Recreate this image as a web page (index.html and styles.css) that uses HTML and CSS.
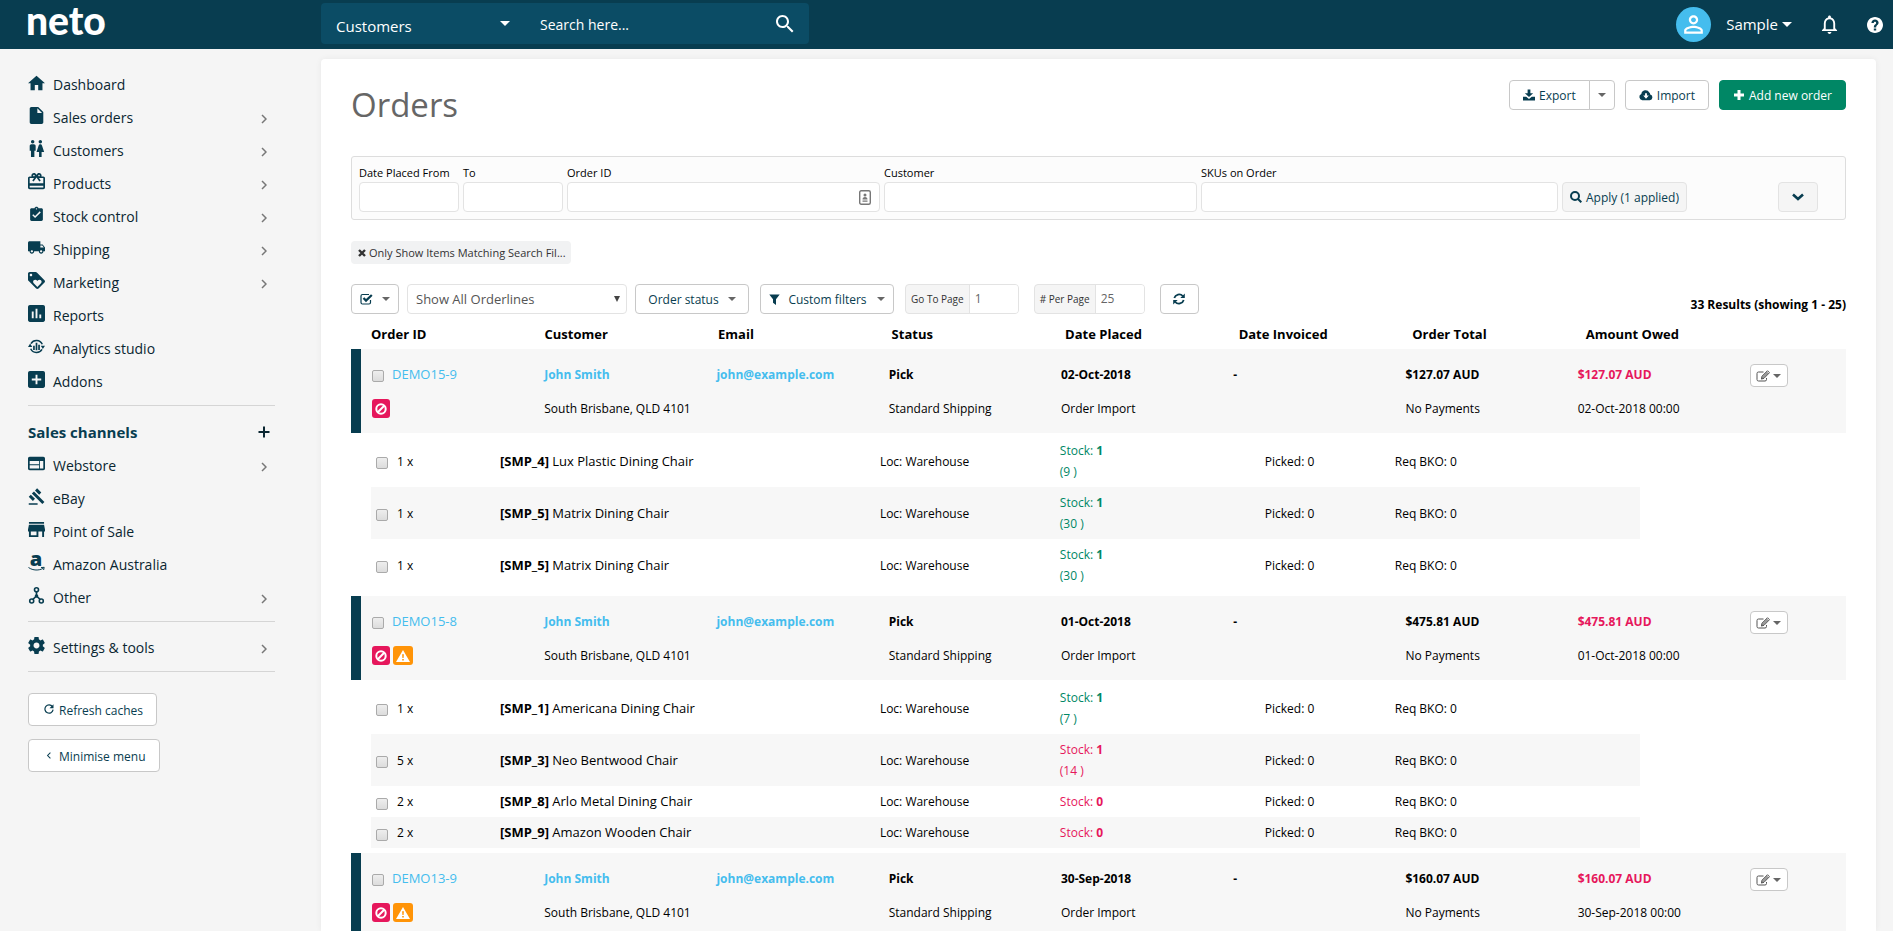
FILE: index.html
```html
<!DOCTYPE html>
<html lang="en">
<head>
<meta charset="utf-8">
<meta name="viewport" content="width=device-width, initial-scale=1">
<title>Orders</title>
<link rel="stylesheet" href="styles.css">
</head>
<body>
<svg class="sprite" aria-hidden="true">
  <symbol id="home" viewBox="2 1 20 20"><path d="M10 20v-6h4v6h5v-8h3L12 3 2 12h3v8z"/></symbol>
  <symbol id="file" viewBox="2 2 20 20"><path d="M6 2c-1.1 0-1.99.9-1.99 2L4 20c0 1.1.89 2 1.99 2H18c1.1 0 2-.9 2-2V8l-6-6H6zm7 7V3.5L18.500 9H13z"/></symbol>
  <symbol id="people" viewBox="2 2 20 20"><path d="M5.500 22v-7.500H4V9c0-1.100.9-2 2-2h3c1.100 0 2 .9 2 2v5.500H9.500V22h-4zM18 22v-6h3l-2.540-7.630C18.180 7.550 17.420 7 16.560 7h-.12c-.86 0-1.630.55-1.900 1.370L12 16h3v6h3zM7.500 6c1.110 0 2-.89 2-2s-.89-2-2-2-2 .89-2 2 .89 2 2 2zm9 0c1.110 0 2-.89 2-2s-.89-2-2-2-2 .89-2 2 .89 2 2 2z"/></symbol>
  <symbol id="gift" viewBox="2 2 20 20"><path d="M20 6h-2.180c.11-.31.18-.65.18-1 0-1.660-1.340-3-3-3-1.050 0-1.960.54-2.500 1.350l-.5.67-.5-.68C10.960 2.540 10.050 2 9 2 7.340 2 6 3.340 6 5c0 .35.07.69.18 1H4c-1.110 0-1.990.89-1.990 2L2 19c0 1.110.89 2 2 2h16c1.110 0 2-.89 2-2V8c0-1.110-.89-2-2-2zm-5-2c.55 0 1 .45 1 1s-.45 1-1 1-1-.45-1-1 .45-1 1-1zM9 4c.55 0 1 .45 1 1s-.45 1-1 1-1-.45-1-1 .45-1 1-1zm11 15H4v-2h16v2zm0-5H4V8h5.080L7 10.830 8.620 12 11 8.760l1-1.360 1 1.360L15.380 12 17 10.830 14.920 8H20v6z"/></symbol>
  <symbol id="clipboard" viewBox="0 0 24 24"><path d="M19 3h-4.180C14.400 1.840 13.300 1 12 1c-1.300 0-2.400.84-2.820 2H5c-1.100 0-2 .9-2 2v14c0 1.100.9 2 2 2h14c1.100 0 2-.9 2-2V5c0-1.100-.9-2-2-2zm-7 0c.55 0 1 .45 1 1s-.45 1-1 1-1-.45-1-1 .45-1 1-1zm-2 14l-4-4 1.410-1.410L10 14.170l6.590-6.590L18 9l-8 8z"/></symbol>
  <symbol id="truck" viewBox="1 1 22 22"><path d="M20 8h-3V4H3c-1.100 0-2 .9-2 2v11h2c0 1.660 1.340 3 3 3s3-1.340 3-3h6c0 1.660 1.340 3 3 3s3-1.340 3-3h2v-5l-3-4zM6 18.500c-.83 0-1.500-.67-1.500-1.500s.67-1.500 1.500-1.500 1.500.67 1.500 1.500-.67 1.500-1.500 1.500zm13.500-9l1.960 2.500H17V9.500h2.500zm-1.500 9c-.83 0-1.500-.67-1.500-1.500s.67-1.500 1.500-1.500 1.500.67 1.500 1.500-.67 1.500-1.500 1.500z"/></symbol>
  <symbol id="tag" viewBox="2 2 20 20"><path d="M21.410 11.580l-9-9C12.050 2.220 11.550 2 11 2H4c-1.100 0-2 .9-2 2v7c0 .55.22 1.050.59 1.420l9 9c.36.36.86.58 1.410.58.55 0 1.050-.22 1.410-.59l7-7c.37-.36.59-.86.59-1.410 0-.55-.23-1.060-.59-1.420zM5.500 7C4.670 7 4 6.330 4 5.500S4.670 4 5.500 4 7 4.670 7 5.500 6.330 7 5.500 7zm11.770 8.270L13 19.540l-4.270-4.270C8.280 14.810 8 14.190 8 13.500c0-1.380 1.120-2.500 2.500-2.500.69 0 1.320.28 1.770.74l.73.72.73-.73c.45-.45 1.080-.73 1.770-.73 1.380 0 2.500 1.120 2.500 2.500 0 .69-.28 1.320-.73 1.770z"/></symbol>
  <symbol id="chart" viewBox="3 3 18 18"><path d="M19 3H5c-1.100 0-2 .9-2 2v14c0 1.100.9 2 2 2h14c1.100 0 2-.9 2-2V5c0-1.100-.9-2-2-2zM9 17H7v-7h2v7zm4 0h-2V7h2v10zm4 0h-2v-4h2v4z"/></symbol>
  <symbol id="addbox" viewBox="3 3 18 18"><path d="M19 3H5c-1.100 0-2 .9-2 2v14c0 1.100.9 2 2 2h14c1.100 0 2-.9 2-2V5c0-1.100-.9-2-2-2zm-2 10h-4v4h-2v-4H7v-2h4V7h2v4h4v2z"/></symbol>
  <symbol id="analytics" viewBox="0 0 20 20"><path d="M3.500 6.500a7.500 7.500 0 0 1 13.300.8M16.500 13.500a7.500 7.500 0 0 1-13.300-.8" fill="none" stroke="currentColor" stroke-width="1.800"/><path d="M0 10.500h5l-2.500-4zM15 9h5l-2.500 4zM6 9h2v5H6zM9 5.500h2v9H9zM12 8h2v6h-2z"/></symbol>
  <symbol id="web" viewBox="2 2 20 20"><path d="M20 4H4c-1.100 0-1.990.9-1.990 2L2 18c0 1.100.9 2 2 2h16c1.100 0 2-.9 2-2V6c0-1.100-.9-2-2-2zm-5 14H4v-4h11v4zm0-5H4V9h11v4zm5 5h-4V9h4v9z"/></symbol>
  <symbol id="gavel" viewBox="0 1 23 22"><path d="M1 21h12v2H1zM5.245 8.070l2.830-2.827 14.140 14.142-2.828 2.828zM12.317 1l5.657 5.656-2.830 2.830-5.654-5.660zM3.825 9.485l5.657 5.657-2.828 2.828-5.657-5.657z"/></symbol>
  <symbol id="store" viewBox="3 3 18 18"><path d="M20 4H4v2h16V4zm1 10v-2l-1-5H4l-1 5v2h1v6h10v-6h4v6h2v-6h1zm-9 4H6v-4h6v4z"/></symbol>
  <symbol id="nodes" viewBox="0 0 17 17"><g fill="none" stroke="currentColor" stroke-width="1.600"><circle cx="8.500" cy="2.800" r="2"/><circle cx="3.700" cy="14" r="2"/><circle cx="13.300" cy="14" r="2"/><path d="M8.500 5v4M4.900 12.300L8.500 9l3.600 3.300"/></g><circle cx="8.500" cy="9" r="1.800"/></symbol>
  <symbol id="gear" viewBox="2 2 20 20"><path d="M19.430 12.980c.04-.32.07-.64.07-.98s-.03-.66-.07-.98l2.110-1.650c.19-.15.24-.42.12-.64l-2-3.460c-.12-.22-.39-.3-.61-.22l-2.490 1c-.52-.4-1.080-.73-1.690-.98l-.38-2.650C14.460 2.180 14.250 2 14 2h-4c-.25 0-.46.18-.49.42l-.38 2.650c-.61.25-1.170.59-1.690.98l-2.490-1c-.23-.09-.49 0-.61.22l-2 3.460c-.13.22-.07.49.12.64l2.110 1.650c-.04.32-.07.65-.07.98s.03.66.07.98l-2.110 1.650c-.19.15-.24.42-.12.64l2 3.460c.12.22.39.3.61.22l2.490-1c.52.4 1.080.73 1.690.98l.38 2.650c.03.24.24.42.49.42h4c.25 0 .46-.18.49-.42l.38-2.650c.61-.25 1.170-.59 1.690-.98l2.490 1c.23.09.49 0 .61-.22l2-3.460c.12-.22.07-.49-.12-.64l-2.110-1.650zM12 15.500c-1.930 0-3.500-1.570-3.500-3.500s1.570-3.500 3.500-3.500 3.500 1.570 3.500 3.500-1.570 3.500-3.500 3.500z"/></symbol>
  <symbol id="chevron" viewBox="0 0 6 10"><path d="M1 1l4 4-4 4" fill="none" stroke="currentColor" stroke-width="1.500"/></symbol>
  <symbol id="caret" viewBox="0 0 8 4"><path d="M0 0h8L4 4z"/></symbol>
  <symbol id="search" viewBox="3 3 18 18"><path d="M15.500 14h-.79l-.28-.27C15.410 12.590 16 11.110 16 9.500 16 5.910 13.090 3 9.500 3S3 5.910 3 9.500 5.910 16 9.500 16c1.610 0 3.090-.59 4.230-1.570l.27.28v.79l5 4.990L20.490 19l-4.990-5zm-6 0C7.010 14 5 11.990 5 9.500S7.010 5 9.500 5 14 7.010 14 9.500 11.990 14 9.500 14z"/></symbol>
  <symbol id="user" viewBox="3 3 18 18"><path d="M12 5.900c1.160 0 2.100.94 2.100 2.100s-.94 2.100-2.100 2.100S9.900 9.160 9.900 8s.94-2.100 2.100-2.100m0 9c2.970 0 6.100 1.460 6.100 2.100v1.100H5.900V17c0-.64 3.130-2.100 6.100-2.100M12 4C9.790 4 8 5.790 8 8s1.790 4 4 4 4-1.790 4-4-1.790-4-4-4zm0 9c-2.670 0-8 1.340-8 4v3h16v-3c0-2.660-5.330-4-8-4z"/></symbol>
  <symbol id="bell" viewBox="3 2 18 20"><path d="M12 22c1.100 0 2-.9 2-2h-4c0 1.100.9 2 2 2zm6-6v-5c0-3.070-1.630-5.640-4.500-6.320V4c0-.83-.67-1.500-1.500-1.500s-1.500.67-1.500 1.500v.68C7.640 5.360 6 7.920 6 11v5l-2 2v1h16v-1l-2-2zm-2 1H8v-6c0-2.480 1.510-4.500 4-4.500s4 2.020 4 4.500v6z"/></symbol>
  <symbol id="help" viewBox="2 2 20 20"><path d="M12 2C6.480 2 2 6.480 2 12s4.480 10 10 10 10-4.480 10-10S17.520 2 12 2zm1.500 17h-3v-2.700h3V19zm1.900-7.400c-1.300 1.200-1.900 1.500-1.900 3.400h-3v-.5c0-1.300.6-2.300 1.500-3.100 1-.9 1.400-1.200 1.400-2 0-.9-.6-1.400-1.400-1.400s-1.500.6-1.500 1.500h-3C7.500 7 9.500 5 12 5s4.500 1.700 4.500 4.100c0 1-.4 1.800-1.100 2.500z"/></symbol>
  <symbol id="download" viewBox="0 0 13 12"><path d="M5 0h3v4h3L6.500 8.300 2 4h3zM0 8h3.500l3 2.300 3-2.300H13v4H0z"/></symbol>
  <symbol id="cloud" viewBox="0 0 15 12"><path d="M3.500 11.500a3.500 3.500 0 0 1-1-6.700A4.500 4.500 0 0 1 11 3.400a2.400 2.400 0 0 1 1 2 3.100 3.100 0 0 1-.5 6.100zM6.500 4v2.500h-2L7.500 10l3-3.500h-2V4z" fill-rule="evenodd"/></symbol>
  <symbol id="plus" viewBox="0 0 12 12"><path d="M4.500 1h3v3.500H11v3H7.500V11h-3V7.500H1v-3h3.500z"/></symbol>
  <symbol id="thinplus" viewBox="0 0 12 12"><path d="M6 .5v11M.5 6h11" stroke="currentColor" stroke-width="2"/></symbol>
  <symbol id="glass" viewBox="0 0 12 12"><g fill="none" stroke="currentColor" stroke-width="2"><circle cx="5" cy="5" r="4"/><path d="M8 8l3.300 3.300"/></g></symbol>
  <symbol id="down" viewBox="0 0 12 8"><path d="M1 1.500l5 4.500 5-4.500" fill="none" stroke="currentColor" stroke-width="2.600"/></symbol>
  <symbol id="cross" viewBox="0 0 8 8"><path d="M1 1l6 6M7 1L1 7" stroke="currentColor" stroke-width="2.400"/></symbol>
  <symbol id="tick" viewBox="0 0 13 12"><path d="M10.500 7v2.500a1.500 1.500 0 0 1-1.500 1.500H2.500A1.500 1.500 0 0 1 1 9.500V3a1.500 1.500 0 0 1 1.500-1.500H9" fill="none" stroke="currentColor" stroke-width="1.200"/><path d="M3.500 5l2.500 2.600L11.800 2" fill="none" stroke="currentColor" stroke-width="2.200"/></symbol>
  <symbol id="funnel" viewBox="0 0 11 11"><path d="M.3.500h10.400L7 5.200V11L4 8.800V5.200z"/></symbol>
  <symbol id="sync" viewBox="0 0 12 12"><path d="M1.300 5a5 5 0 0 1 8.500-2M10.700 7a5 5 0 0 1-8.500 2" fill="none" stroke="currentColor" stroke-width="1.800"/><path d="M11.800.5V5H7.300zM.2 11.500V7h4.500z"/></symbol>
  <symbol id="reload" viewBox="0 0 10 10"><path d="M8.400 2.700a4.100 4.100 0 1 0 .7 3" fill="none" stroke="currentColor" stroke-width="1.200"/><path d="M9.500.3v4H5.500z"/></symbol>
  <symbol id="ban" viewBox="0 0 12 12"><g fill="none" stroke="currentColor" stroke-width="2"><circle cx="6" cy="6" r="4.700"/><path d="M2.800 9.200l6.400-6.400"/></g></symbol>
  <symbol id="warn" viewBox="0 0 14 12"><path d="M7 0l7 12H0zM6.100 4.200l.3 3.800h1.200l.3-3.800zM6.200 9v1.500h1.600V9z" fill-rule="evenodd"/></symbol>
  <symbol id="edit" viewBox="0 0 14 12"><path d="M10.500 8v1.500A1.500 1.500 0 0 1 9 11H2.500A1.500 1.500 0 0 1 1 9.500v-6A1.500 1.500 0 0 1 2.500 2h5" fill="none" stroke="currentColor"/><path d="M5.500 9l.5-2.800L11.500.7l2 2L8 8.300z" fill="none" stroke="currentColor"/><path d="M5 9.500l.7-2.600L11 1.600l1.600 1.600-5.200 5.400z" fill-opacity=".6"/></symbol>
  <symbol id="contact" viewBox="0 0 12 15"><rect x=".7" y=".7" width="10.600" height="13.600" rx="1.500" fill="none" stroke="currentColor" stroke-width="1.400"/><circle cx="6" cy="5" r="1.500"/><path d="M3.500 9.500a2.500 2.500 0 0 1 5 0zM3.500 10.500h5v1.200h-5z"/></symbol>
</svg>

<header class="topbar">
  <a class="logo" href="#" aria-label="neto">neto</a>
  <form class="finder">
    <label class="picker finder-type">
      <select aria-label="Search in"><option>Customers</option></select>
      <svg class="caret"><use href="#caret"/></svg>
    </label>
    <input class="finder-text" type="text" placeholder="Search here..." aria-label="Search">
    <button class="finder-go" type="button" aria-label="Search"><svg><use href="#search"/></svg></button>
  </form>
  <div class="account">
    <span class="avatar"><svg><use href="#user"/></svg></span>
    <button class="account-name" type="button">Sample <svg class="caret"><use href="#caret"/></svg></button>
    <button class="bell" type="button" aria-label="Notifications"><svg><use href="#bell"/></svg></button>
    <a class="help" href="#" aria-label="Help"><svg><use href="#help"/></svg></a>
  </div>
</header>

<div class="layout">
  <nav class="sidebar">
    <a class="nav-item" href="#"><svg class="nav-icon"><use href="#home"/></svg>Dashboard</a>
    <a class="nav-item" href="#"><svg class="nav-icon"><use href="#file"/></svg>Sales orders<svg class="nav-more"><use href="#chevron"/></svg></a>
    <a class="nav-item" href="#"><svg class="nav-icon"><use href="#people"/></svg>Customers<svg class="nav-more"><use href="#chevron"/></svg></a>
    <a class="nav-item" href="#"><svg class="nav-icon"><use href="#gift"/></svg>Products<svg class="nav-more"><use href="#chevron"/></svg></a>
    <a class="nav-item" href="#"><svg class="nav-icon"><use href="#clipboard"/></svg>Stock control<svg class="nav-more"><use href="#chevron"/></svg></a>
    <a class="nav-item" href="#"><svg class="nav-icon"><use href="#truck"/></svg>Shipping<svg class="nav-more"><use href="#chevron"/></svg></a>
    <a class="nav-item" href="#"><svg class="nav-icon"><use href="#tag"/></svg>Marketing<svg class="nav-more"><use href="#chevron"/></svg></a>
    <a class="nav-item" href="#"><svg class="nav-icon"><use href="#chart"/></svg>Reports</a>
    <a class="nav-item" href="#"><svg class="nav-icon"><use href="#analytics"/></svg>Analytics studio</a>
    <a class="nav-item" href="#"><svg class="nav-icon"><use href="#addbox"/></svg>Addons</a>
    <hr class="divider">
    <div class="nav-heading"><h2>Sales channels</h2><button type="button" aria-label="Add sales channel"><svg><use href="#thinplus"/></svg></button></div>
    <a class="nav-item" href="#"><svg class="nav-icon"><use href="#web"/></svg>Webstore<svg class="nav-more"><use href="#chevron"/></svg></a>
    <a class="nav-item" href="#"><svg class="nav-icon"><use href="#gavel"/></svg>eBay</a>
    <a class="nav-item" href="#"><svg class="nav-icon"><use href="#store"/></svg>Point of Sale</a>
    <a class="nav-item" href="#"><svg class="nav-icon amazon" viewBox="0 0 17 17" aria-hidden="true"><text x="8" y="12" text-anchor="middle">a</text><path d="M.5 13.500c4.500 3.200 10.500 3.200 14.800.8M13 13.600l3.200-.3-.6 2.700" fill="none" stroke="currentColor"/></svg>Amazon Australia</a>
    <a class="nav-item" href="#"><svg class="nav-icon"><use href="#nodes"/></svg>Other<svg class="nav-more"><use href="#chevron"/></svg></a>
    <hr class="divider">
    <a class="nav-item" href="#"><svg class="nav-icon"><use href="#gear"/></svg>Settings &amp; tools<svg class="nav-more"><use href="#chevron"/></svg></a>
    <hr class="divider">
    <div class="nav-actions">
      <button class="btn" type="button"><svg class="i10"><use href="#reload"/></svg>Refresh caches</button>
      <button class="btn" type="button"><svg class="back"><use href="#chevron"/></svg>Minimise menu</button>
    </div>
  </nav>

  <main class="card">
    <div class="title-row">
      <h1>Orders</h1>
      <div class="title-actions">
        <div class="split">
          <button class="btn" type="button"><svg class="i12"><use href="#download"/></svg>Export</button>
          <button class="btn" type="button" aria-label="Export options"><svg class="caret"><use href="#caret"/></svg></button>
        </div>
        <button class="btn" type="button"><svg class="i14"><use href="#cloud"/></svg>Import</button>
        <button class="btn primary" type="button"><svg class="i12"><use href="#plus"/></svg>Add new order</button>
      </div>
    </div>

    <form class="filters">
      <label class="field">Date Placed From<input type="text"></label>
      <label class="field">To<input type="text"></label>
      <label class="field with-icon">Order ID<input type="text"><svg><use href="#contact"/></svg></label>
      <label class="field">Customer<input type="text"></label>
      <label class="field">SKUs on Order<input type="text"></label>
      <button class="btn soft" type="button"><svg class="i12"><use href="#glass"/></svg>Apply (1 applied)</button>
      <button class="btn soft expand" type="button" aria-label="More filters"><svg class="i12"><use href="#down"/></svg></button>
    </form>

    <button class="chip" type="button"><svg><use href="#cross"/></svg>Only Show Items Matching Search Fil...</button>

    <div class="toolbar">
      <button class="btn select-all" type="button" aria-label="Select"><svg class="i13"><use href="#tick"/></svg><svg class="caret"><use href="#caret"/></svg></button>
      <label class="picker lines-picker">
        <select aria-label="Order lines"><option>Show All Orderlines</option></select>
        <svg class="arrow" viewBox="0 0 6 6"><path d="M0 0h6L3 6z"/></svg>
      </label>
      <button class="btn status" type="button">Order status<svg class="caret"><use href="#caret"/></svg></button>
      <button class="btn custom" type="button"><svg class="i11"><use href="#funnel"/></svg>Custom filters<svg class="caret"><use href="#caret"/></svg></button>
      <label class="group">Go To Page<input type="text" value="1"></label>
      <label class="group">&#35; Per Page<input type="text" value="25"></label>
      <button class="btn refresh" type="button" aria-label="Refresh"><svg class="i12"><use href="#sync"/></svg></button>
      <p class="results">33 Results (showing 1 - 25)</p>
    </div>

    <table class="orders">
      <thead>
        <tr><th>Order ID</th><th>Customer</th><th>Email</th><th>Status</th><th>Date Placed</th><th>Date Invoiced</th><th>Order Total</th><th>Amount Owed</th></tr>
      </thead>
      <tbody>
        <tr class="order">
          <td><div class="pick"><input type="checkbox" aria-label="Select DEMO15-9"><a href="#">DEMO15-9</a></div><div class="flags"><span class="flag stop"><svg class="i12"><use href="#ban"/></svg></span></div></td>
          <td><a href="#"><b>John Smith</b></a><span>South Brisbane, QLD 4101</span></td>
          <td><a href="#"><b>john@example.com</b></a></td>
          <td><b>Pick</b><span>Standard Shipping</span></td>
          <td><b>02-Oct-2018</b><span>Order Import</span></td>
          <td><b>-</b></td>
          <td><b>$127.07 AUD</b><span>No Payments</span></td>
          <td><b class="low">$127.07 AUD</b><span>02-Oct-2018 00:00</span></td>
          <td><button class="btn edit" type="button" aria-label="Edit order"><svg class="i14"><use href="#edit"/></svg><svg class="caret"><use href="#caret"/></svg></button></td>
        </tr>
      </tbody>
      <tbody class="lines">
        <tr><td><input type="checkbox" aria-label="Select line">1 x</td><td class="item"><b>[SMP_4]</b> Lux Plastic Dining Chair</td><td>Loc: Warehouse</td><td class="ok">Stock: <b>1</b><br>(9 )</td><td>Picked: 0</td><td>Req BKO: 0</td></tr>
        <tr><td><input type="checkbox" aria-label="Select line">1 x</td><td class="item"><b>[SMP_5]</b> Matrix Dining Chair</td><td>Loc: Warehouse</td><td class="ok">Stock: <b>1</b><br>(30 )</td><td>Picked: 0</td><td>Req BKO: 0</td></tr>
        <tr><td><input type="checkbox" aria-label="Select line">1 x</td><td class="item"><b>[SMP_5]</b> Matrix Dining Chair</td><td>Loc: Warehouse</td><td class="ok">Stock: <b>1</b><br>(30 )</td><td>Picked: 0</td><td>Req BKO: 0</td></tr>
      </tbody>
      <tbody>
        <tr class="order">
          <td><div class="pick"><input type="checkbox" aria-label="Select DEMO15-8"><a href="#">DEMO15-8</a></div><div class="flags"><span class="flag stop"><svg class="i12"><use href="#ban"/></svg></span><span class="flag caution"><svg class="i14"><use href="#warn"/></svg></span></div></td>
          <td><a href="#"><b>John Smith</b></a><span>South Brisbane, QLD 4101</span></td>
          <td><a href="#"><b>john@example.com</b></a></td>
          <td><b>Pick</b><span>Standard Shipping</span></td>
          <td><b>01-Oct-2018</b><span>Order Import</span></td>
          <td><b>-</b></td>
          <td><b>$475.81 AUD</b><span>No Payments</span></td>
          <td><b class="low">$475.81 AUD</b><span>01-Oct-2018 00:00</span></td>
          <td><button class="btn edit" type="button" aria-label="Edit order"><svg class="i14"><use href="#edit"/></svg><svg class="caret"><use href="#caret"/></svg></button></td>
        </tr>
      </tbody>
      <tbody class="lines">
        <tr><td><input type="checkbox" aria-label="Select line">1 x</td><td class="item"><b>[SMP_1]</b> Americana Dining Chair</td><td>Loc: Warehouse</td><td class="ok">Stock: <b>1</b><br>(7 )</td><td>Picked: 0</td><td>Req BKO: 0</td></tr>
        <tr><td><input type="checkbox" aria-label="Select line">5 x</td><td class="item"><b>[SMP_3]</b> Neo Bentwood Chair</td><td>Loc: Warehouse</td><td class="low">Stock: <b>1</b><br>(14 )</td><td>Picked: 0</td><td>Req BKO: 0</td></tr>
        <tr><td><input type="checkbox" aria-label="Select line">2 x</td><td class="item"><b>[SMP_8]</b> Arlo Metal Dining Chair</td><td>Loc: Warehouse</td><td class="low">Stock: <b>0</b></td><td>Picked: 0</td><td>Req BKO: 0</td></tr>
        <tr><td><input type="checkbox" aria-label="Select line">2 x</td><td class="item"><b>[SMP_9]</b> Amazon Wooden Chair</td><td>Loc: Warehouse</td><td class="low">Stock: <b>0</b></td><td>Picked: 0</td><td>Req BKO: 0</td></tr>
      </tbody>
      <tbody>
        <tr class="order">
          <td><div class="pick"><input type="checkbox" aria-label="Select DEMO13-9"><a href="#">DEMO13-9</a></div><div class="flags"><span class="flag stop"><svg class="i12"><use href="#ban"/></svg></span><span class="flag caution"><svg class="i14"><use href="#warn"/></svg></span></div></td>
          <td><a href="#"><b>John Smith</b></a><span>South Brisbane, QLD 4101</span></td>
          <td><a href="#"><b>john@example.com</b></a></td>
          <td><b>Pick</b><span>Standard Shipping</span></td>
          <td><b>30-Sep-2018</b><span>Order Import</span></td>
          <td><b>-</b></td>
          <td><b>$160.07 AUD</b><span>No Payments</span></td>
          <td><b class="low">$160.07 AUD</b><span>30-Sep-2018 00:00</span></td>
          <td><button class="btn edit" type="button" aria-label="Edit order"><svg class="i14"><use href="#edit"/></svg><svg class="caret"><use href="#caret"/></svg></button></td>
        </tr>
      </tbody>
    </table>
  </main>
</div>
</body>
</html>
```
FILE: styles.css
```css
:root {
  --navy: #083d50;
  --blue: #45bdee;
  --green: #008765;
  --red: #e6175c;
  --line: #e3e3e3;
}

* { box-sizing: border-box; }

html, body { height: 100%; }

body {
  margin: 0;
  display: flex;
  flex-direction: column;
  overflow: hidden;
  background: #f5f5f5;
  color: #000;
  font: 12px/21px "Open Sans", "Noto Sans", sans-serif;
}

button, input, select { font: inherit; color: inherit; margin: 0; }
button { cursor: pointer; padding: 0; border: 0; background: none; white-space: nowrap; }
a { text-decoration: none; color: inherit; }
svg { display: block; flex: none; fill: currentColor; }
.sprite { position: absolute; width: 0; height: 0; }

.i10 { width: 10px; height: 10px; }
.i11 { width: 11px; height: 11px; }
.i12 { width: 12px; height: 12px; }
.i13 { width: 13px; height: 12px; }
.i14 { width: 14px; height: 12px; }
.caret { width: 8px; height: 4px; color: #666; }

/* Top bar */
.topbar {
  flex: none;
  height: 49px;
  display: flex;
  align-items: center;
  padding: 0 10px 0 26px;
  background: var(--navy);
  color: #fff;
}
.logo {
  width: 295px;
  padding-bottom: 8px;
  font: 900 39px/39px Lato, sans-serif;
}
.finder {
  display: flex;
  width: 488px;
  height: 41px;
  margin-bottom: 2px;
  border-radius: 4px;
  background: #0b4c65;
  font-size: 15px;
}
.picker { display: grid; align-items: center; }
.picker > * { grid-area: 1 / 1; }
.picker select { appearance: none; border: 0; background: none; width: 100%; height: 100%; outline: 0; }
.picker svg { justify-self: end; pointer-events: none; }
.finder-type { width: 205px; }
.finder-type select { padding: 5px 15px 0; }
.finder .caret, .account .caret { width: 10px; height: 5px; color: #fff; }
.finder-type .caret { margin-right: 16px; }
.finder-text { flex: 1; min-width: 0; border: 0; background: none; padding: 2px 15px 0 14px; outline: 0; font-size: 14px; }
.finder-text::placeholder { color: #fff; opacity: 1; }
.finder-go { padding: 0 15px; }
.finder-go svg { width: 18px; height: 18px; }
.account { margin-left: auto; display: flex; align-items: center; font-size: 15px; }
.avatar { width: 35px; height: 35px; display: grid; place-items: center; border-radius: 50%; background: var(--blue); }
.avatar svg { width: 21px; height: 21px; }
.account-name { display: flex; align-items: center; gap: 4px; margin: 0 29px 0 15px; }
.bell svg { width: 17px; height: 19px; }
.help { margin-left: 29px; }
.help svg { width: 16px; height: 16px; }

/* Page frame */
.layout { flex: 1; min-height: 0; display: flex; }
.sidebar { flex: none; width: 321px; padding: 19px 46px 0 28px; font-size: 14px; }
.nav-item { display: flex; align-items: center; gap: 8px; height: 33px; color: #0a2631; }
.nav-icon { width: 17px; height: 17px; margin-bottom: 5px; color: var(--navy); }
.nav-more { width: 6px; height: 10px; margin: 3px 8px 0 auto; color: #777; }
.amazon { overflow: visible; font: 800 20px "Open Sans", sans-serif; }
.divider { height: 1px; margin: 7px 0 9px; border: 0; background: #d5d5d5; }
.nav-heading { display: flex; align-items: center; justify-content: space-between; height: 34px; padding-right: 5px; color: var(--navy); }
.nav-heading h2 { margin: 0; font-size: 15px; line-height: 21px; }
.nav-heading svg { width: 12px; height: 12px; color: #0a2631; }
.nav-actions { display: flex; flex-direction: column; align-items: flex-start; gap: 13px; padding-top: 12px; }
.nav-actions .btn { height: 33px; padding: 2px 13px 0 15px; gap: 5px; }
.nav-actions svg { margin-bottom: 3px; }
.back { width: 10px; height: 7px; transform: rotate(180deg); }

.card {
  flex: 1;
  min-width: 0;
  margin: 10px 17px 0 0;
  padding: 21px 30px 0;
  border-radius: 4px 4px 0 0;
  background: #fff;
  box-shadow: 0 0 6px rgba(0, 0, 0, .06);
}

.btn {
  display: inline-flex;
  align-items: center;
  justify-content: center;
  gap: 4px;
  height: 30px;
  padding: 0 13px;
  border: 1px solid #c8c8c8;
  border-radius: 4px;
  background: #fff;
  color: var(--navy);
  font-size: 12px;
}
.primary { border-color: var(--green); background: var(--green); color: #fff; }
.soft { border-color: var(--line); background: #f5f5f5; font-size: 12px; padding: 0 8px; }

.title-row { display: flex; align-items: flex-start; justify-content: space-between; height: 76px; }
h1 { margin: 0; font-size: 33px; font-weight: 400; line-height: 50px; color: #666; }
.title-actions { display: flex; gap: 10px; }
.split { display: flex; }
.split .btn:first-child { border-radius: 4px 0 0 4px; }
.split .btn:last-child { border-radius: 0 4px 4px 0; margin-left: -1px; padding: 0 8px; }

/* Filters */
.filters {
  display: grid;
  grid-template-columns: 100px 100px minmax(0, 313fr) minmax(0, 313fr) minmax(0, 357fr) 125px 127px;
  align-items: end;
  gap: 4px;
  height: 64px;
  padding: 0 27px 7px 7px;
  border: 1px solid #ddd;
  border-radius: 3px;
  background: #fcfcfc;
}
.field { display: grid; font-size: 11px; line-height: 18px; }
.field input { width: 100%; height: 30px; border: 1px solid var(--line); border-radius: 4px; background: #fff; padding: 0 8px; }
.with-icon svg { grid-area: 2 / 1; justify-self: end; align-self: center; width: 12px; height: 15px; margin-right: 9px; color: #777; }
.with-icon input { grid-area: 2 / 1; }
.expand { justify-self: end; width: 40px; }

.chip {
  display: flex;
  align-items: center;
  gap: 3px;
  height: 23px;
  margin-top: 21px;
  padding: 0 5px 0 7px;
  border-radius: 4px;
  background: #f1f2f3;
  color: #333;
  font-size: 11px;
}
.chip svg { width: 8px; height: 8px; }

/* Toolbar */
.toolbar { display: flex; margin-top: 20px; }
.select-all { width: 48px; gap: 9px; padding: 0; margin-right: 8px; }
.lines-picker { width: 220px; height: 30px; margin-right: 8px; border: 1px solid var(--line); border-radius: 4px; color: #555; font-size: 13px; }
.lines-picker select { padding: 0 8px; }
.arrow { width: 6px; height: 6px; margin-right: 6px; color: #444; }
.status { width: 114px; gap: 9px; margin-right: 11px; padding: 0; }
.custom { width: 134px; gap: 8px; margin-right: 11px; padding: 0; }
.custom .caret { margin-left: 2px; }
.group { display: flex; height: 30px; margin-right: 15px; padding-left: 5px; border: 1px solid var(--line); border-radius: 4px; background: #f5f5f5; color: #333; font-size: 10px; line-height: 28px; white-space: nowrap; }
.group input { width: 49px; margin-left: 5px; padding: 0 5px; border: 0; border-left: 1px solid var(--line); border-radius: 0 3px 3px 0; background: #fff; color: #666; font-size: 12px; }
.refresh { width: 39px; padding: 0; }
.results { margin: 10px 0 0 auto; font-weight: 700; white-space: nowrap; }

/* Orders table */
.orders, .orders thead, .orders tbody { display: block; }
.orders tr { display: grid; }
.orders th, .orders td { display: block; padding: 0; min-width: 0; text-align: left; white-space: nowrap; }
.orders thead tr { grid-template-columns: repeat(8, 2fr) 1fr; align-items: center; height: 34px; padding: 4px 0 0 20px; font-size: 13px; }
.order { grid-template-columns: repeat(8, 172fr) 96fr; height: 84px; padding: 15px 0 0 11px; border-left: 10px solid var(--navy); background: #f7f7f7; }
.order td > * { display: block; }
.order td > a, .order td > b { line-height: 22px; }
.order td > span { margin-top: 12px; }
.order a { color: var(--blue); }
.order .pick { display: flex; gap: 8px; height: 22px; }
.pick a { line-height: 20px; font-size: 13px; }
.order .flags { display: flex; gap: 3px; margin-top: 13px; }
.order input, .lines input {
  appearance: none;
  flex: none;
  width: 12px;
  height: 12px;
  border: 1px solid #aaa;
  border-radius: 2px;
  background: linear-gradient(#eee, #dcdcdc);
}
.pick input { margin-top: 6px; }
.flag { display: grid; place-items: center; height: 19px; padding: 0 3px; border-radius: 3px; color: #fff; }
.stop { background: var(--red); }
.caution { background: #ff9408; }
.order .edit { display: inline-flex; height: 23px; width: 38px; padding: 0; gap: 3px; color: #555; }

.orders .lines { margin: 2px 13.8% 5px 20px; }
.lines tr { grid-template-columns: 129fr 380fr 180fr 205fr 130fr 245fr; align-items: center; padding: 5px 0; }
.lines tr:nth-child(even) { background: #f7f7f7; }
.lines td:first-child { display: flex; align-items: center; gap: 9px; padding-left: 5px; }
.lines input { margin-top: 4px; }
.lines .item { font-size: 13px; }
.ok { color: var(--green); }
.low { color: var(--red); }
```
